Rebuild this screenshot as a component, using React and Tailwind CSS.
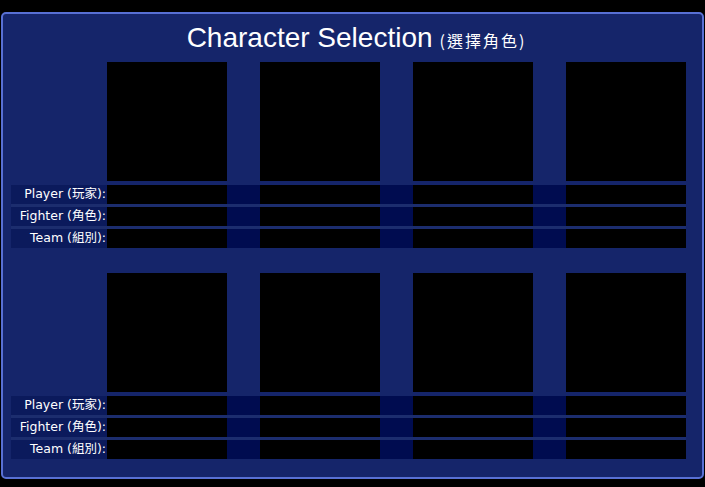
const PLAYERS = [0, 1, 2, 3];
const FIELDS = ['Player (玩家):', 'Fighter (角色):', 'Team (組別):'];

const font = { fontFamily: '"DejaVu Sans", "Noto Sans CJK TC", sans-serif' };

function SelectionBlock() {
  return (
    <div className="flex w-[675px] flex-col">
      <div className="grid grid-cols-[96px_120px_33px_120px_33px_120px_33px_120px]">
        <div />
        {PLAYERS.map((p) => [
          p > 0 && <div key={`g${p}`} />,
          <div key={p} className="h-[119px] bg-black" />,
        ])}
      </div>
      <div className="mt-[4px] flex flex-col gap-[3px] bg-[#1c2d6e]">
        {FIELDS.map((label) => (
          <div
            key={label}
            className="grid h-[19px] grid-cols-[96px_120px_33px_120px_33px_120px_33px_120px]"
          >
            <div
              className="flex items-center justify-end bg-[#0b1a5c] pr-[1px] text-[12.5px] text-white"
              style={font}
            >
              {label}
            </div>
            {PLAYERS.map((p) => [
              p > 0 && <div key={`g${p}`} className="bg-[#000c50]" />,
              <div key={p} className="bg-black" />,
            ])}
          </div>
        ))}
      </div>
    </div>
  );
}

export default function App() {
  return (
    <div className="h-[487px] w-[705px] bg-black pt-[12px] pl-[1px]">
      <div className="flex h-[467px] w-[703px] flex-col rounded-[5px] border-2 border-[#5870d4] bg-[#15256a] pl-[8px]">
        <div className="flex h-[48px] items-baseline justify-center pt-[10px] text-white">
          <span
            className="text-[28px] leading-none"
            style={{ fontFamily: '"Liberation Sans", sans-serif' }}
          >
            Character Selection
          </span>
          <span
            className="ml-[7px] text-[16px] leading-none tracking-[2px]"
            style={{ fontFamily: '"Noto Sans CJK TC", sans-serif' }}
          >
            (選擇角色)
          </span>
        </div>
        <SelectionBlock />
        <div className="h-[25px]" />
        <SelectionBlock />
      </div>
    </div>
  );
}
